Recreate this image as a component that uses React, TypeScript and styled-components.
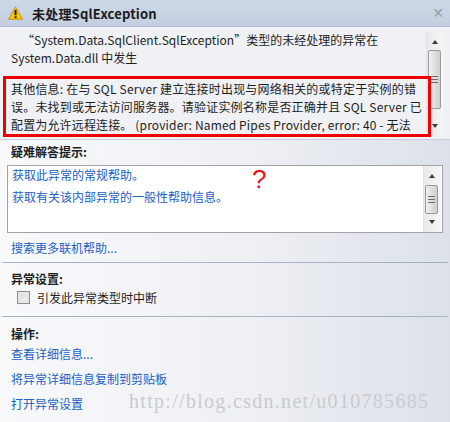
import React from "react";
import styled, { createGlobalStyle } from "styled-components";

const GlobalStyle = createGlobalStyle`
  html, body {
    margin: 0;
    padding: 0;
    background: #ffffff;
  }
  body {
    font-family: "Noto Sans CJK SC", "Noto Sans", sans-serif;
    font-size: 12px;
    color: #1e1e1e;
  }
`;

const Window = styled.div`
  width: 450px;
  height: 422px;
  box-sizing: border-box;
  overflow: hidden;
  position: relative;
  display: flex;
  flex-direction: column;
  background: linear-gradient(to right, #f8f9fb 0%, #eef0f4 55%, #dce1e9 100%);
`;

const TitleBar = styled.div`
  height: 26px;
  flex: none;
  display: flex;
  align-items: center;
  padding: 0 6px 0 8px;
  gap: 9px;
  background: linear-gradient(to bottom, #cdd8e7, #c3cfe0);
  border-bottom: 1px solid #b4c0d0;
`;

const Title = styled.div`
  flex: 1;
  font-weight: bold;
  font-size: 13px;
  color: #1b1b1b;
  letter-spacing: 0.2px;
`;

const CloseButton = styled.div`
  color: #9a9ea6;
  font-size: 14px;
  font-family: "DejaVu Sans", sans-serif;
  line-height: 1;
`;

const MessagePane = styled.div`
  height: 112px;
  flex: none;
  display: flex;
  background: #eff1f4;
  border-bottom: 1px solid #c9ced6;
`;

const MessageText = styled.div`
  flex: 1;
  min-width: 0;
  padding: 4px 0 0 0;
  line-height: 18px;
`;

const Line = styled.div<{ $indent?: number; $spacing?: number }>`
  white-space: nowrap;
  padding-left: ${({ $indent }) => $indent ?? 11}px;
  letter-spacing: ${({ $spacing }) => $spacing ?? 0}px;
`;

const RedBox = styled.div`
  position: relative;
  z-index: 1;
  margin: 9px 0 0 3px;
  width: 417px;
  border: 3px solid #ee0000;
  padding: 1px 0 0 5px;
  box-sizing: content-box;
  line-height: 18px;
`;

const ScrollTrack = styled.div<{ $height: number }>`
  width: 17px;
  height: ${({ $height }) => $height}px;
  flex: none;
  position: relative;
  background: linear-gradient(to right, #e9e9e9, #f6f6f6);
  border-left: 1px solid #e2e2e2;
`;

const Arrow = styled.div<{ $top?: boolean }>`
  position: absolute;
  left: 5px;
  ${({ $top }) => ($top ? "top: 8px;" : "bottom: 8px;")}
  width: 0;
  height: 0;
  border-left: 3.5px solid transparent;
  border-right: 3.5px solid transparent;
  ${({ $top }) =>
    $top ? "border-bottom: 4px solid #3c3c3c;" : "border-top: 4px solid #3c3c3c;"}
`;

const Thumb = styled.div`
  position: absolute;
  left: 1px;
  width: 13px;
  box-sizing: border-box;
  border: 1px solid #9a9a9a;
  border-radius: 2px;
  background: linear-gradient(to right, #f2f2f2, #dcdcdc 60%, #cfcfcf);
  display: flex;
  flex-direction: column;
  align-items: center;
  justify-content: center;
  gap: 2px;
`;

const Grip = styled.div`
  width: 7px;
  height: 1px;
  background: #6b6b6b;
`;

const Body = styled.div`
  flex: 1;
  display: flex;
  flex-direction: column;
  padding: 3px 0 0 0;
`;

const Section = styled.div`
  padding: 0 7px 0 7px;
  display: flex;
  flex-direction: column;
`;

const Heading = styled.div<{ $top?: number }>`
  font-weight: bold;
  padding-left: 4px;
  margin-top: ${({ $top }) => $top ?? 0}px;
  line-height: 18px;
  color: #1e1e1e;
`;

const HelpBox = styled.div`
  margin-top: 4px;
  height: 68px;
  box-sizing: border-box;
  border: 1px solid #a3a3a3;
  background: #ffffff;
  display: flex;
  position: relative;
`;

const HelpLinks = styled.div`
  flex: 1;
  padding: 0 0 0 4px;
  display: flex;
  flex-direction: column;
  gap: 4px;
  line-height: 18px;
`;

const Link = styled.div`
  color: #2260c4;
  white-space: nowrap;
  line-height: 18px;
`;

const QuestionMark = styled.div`
  position: absolute;
  left: 244px;
  top: 0px;
  color: #ee1111;
  font-size: 26px;
  font-family: "Liberation Sans", sans-serif;
  line-height: 1;
`;

const LinkRow = styled.div`
  padding: 6px 0 0 4px;
  height: 23px;
`;

const Divider = styled.div<{ $top?: number }>`
  margin: ${({ $top }) => $top ?? 0}px 2px 0 2px;
  height: 1px;
  background: #a7b3c4;
`;

const CheckRow = styled.div`
  display: flex;
  align-items: center;
  gap: 7px;
  padding: 0 0 0 10px;
  height: 18px;
`;

const CheckBox = styled.div`
  width: 11px;
  height: 11px;
  border: 1px solid #8e8f8f;
  background: linear-gradient(135deg, #d9d9d9, #f4f4f4);
  box-shadow: inset 0 0 0 2px #e6e6e6;
`;

const ActionList = styled.div`
  display: flex;
  flex-direction: column;
  padding-left: 4px;
  gap: 7px;
  margin-top: 2px;
`;

const Watermark = styled.div`
  position: absolute;
  left: 129px;
  bottom: 9px;
  font-family: "Liberation Serif", serif;
  font-size: 20px;
  color: #c9cbcf;
  letter-spacing: 1.3px;
  white-space: nowrap;
`;

const WarningIcon = () => (
  <svg width="15" height="14" viewBox="0 0 15 14">
    <path d="M7.5 0.8 L14.4 13.2 L0.6 13.2 Z" fill="#f7c800" stroke="#c58f00" strokeWidth="0.9" strokeLinejoin="round" />
    <rect x="6.6" y="4" width="1.9" height="5.2" fill="#111" />
    <rect x="6.6" y="10.3" width="1.9" height="1.8" fill="#111" />
  </svg>
);

const Scrollbar = ({
  height,
  thumbTop,
  thumbHeight,
}: {
  height: number;
  thumbTop: number;
  thumbHeight: number;
}) => (
  <ScrollTrack $height={height}>
    <Arrow $top />
    <Thumb style={{ top: thumbTop, height: thumbHeight }}>
      <Grip />
      <Grip />
      <Grip />
    </Thumb>
    <Arrow />
  </ScrollTrack>
);

const TopScrollWrap = styled.div`
  padding: 5px 6px 0 0;
  display: flex;
`;

const HelpScrollWrap = styled.div`
  padding: 0 1px 0 0;
  display: flex;
`;

export default function App() {
  return (
    <>
      <GlobalStyle />
      <Window>
        <TitleBar>
          <WarningIcon />
          <Title>未处理SqlException</Title>
          <CloseButton>✕</CloseButton>
        </TitleBar>
        <MessagePane>
          <MessageText>
            <Line $indent={22}>“System.Data.SqlClient.SqlException”类型的未经处理的异常在</Line>
            <Line>System.Data.dll 中发生</Line>
            <RedBox>
              <Line $indent={0} $spacing={0.2}>其他信息: 在与 SQL Server 建立连接时出现与网络相关的或特定于实例的错</Line>
              <Line $indent={0} $spacing={0.2}>误。未找到或无法访问服务器。请验证实例名称是否正确并且 SQL Server 已</Line>
              <Line $indent={0} $spacing={0.15}>配置为允许远程连接。 (provider: Named Pipes Provider, error: 40 - 无法</Line>
            </RedBox>
          </MessageText>
          <TopScrollWrap>
            <Scrollbar height={104} thumbTop={18} thumbHeight={59} />
          </TopScrollWrap>
        </MessagePane>
        <Body>
          <Section>
            <Heading>疑难解答提示:</Heading>
            <HelpBox>
              <HelpLinks>
                <Link>获取此异常的常规帮助。</Link>
                <Link>获取有关该内部异常的一般性帮助信息。</Link>
              </HelpLinks>
              <QuestionMark>?</QuestionMark>
              <HelpScrollWrap>
                <Scrollbar height={66} thumbTop={19} thumbHeight={29} />
              </HelpScrollWrap>
            </HelpBox>
            <LinkRow>
              <Link>搜索更多联机帮助...</Link>
            </LinkRow>
          </Section>
          <Divider />
          <Section>
            <Heading $top={7}>异常设置:</Heading>
            <CheckRow>
              <CheckBox />
              <span>引发此异常类型时中断</span>
            </CheckRow>
          </Section>
          <Divider $top={10} />
          <Section>
            <Heading $top={8}>操作:</Heading>
            <ActionList>
              <Link>查看详细信息...</Link>
              <Link>将异常详细信息复制到剪贴板</Link>
              <Link>打开异常设置</Link>
            </ActionList>
          </Section>
        </Body>
        <Watermark>http://blog.csdn.net/u010785685</Watermark>
      </Window>
    </>
  );
}
